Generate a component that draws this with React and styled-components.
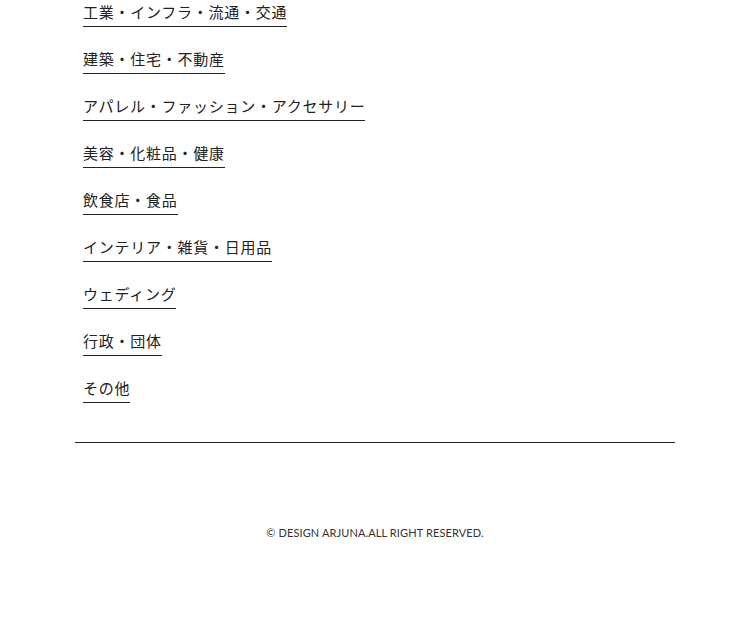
import styled, { createGlobalStyle } from "styled-components";

const GlobalStyle = createGlobalStyle`
  html, body {
    margin: 0;
    padding: 0;
    background: #fff;
  }
  body {
    font-family: "Noto Sans CJK JP", "Noto Sans", sans-serif;
    color: #222;
  }
`;

const categories = [
  "工業・インフラ・流通・交通",
  "建築・住宅・不動産",
  "アパレル・ファッション・アクセサリー",
  "美容・化粧品・健康",
  "飲食店・食品",
  "インテリア・雑貨・日用品",
  "ウェディング",
  "行政・団体",
  "その他",
];

const App = () => {
  return (
    <>
      <GlobalStyle />
      <Page>
        <CategoryList>
          {categories.map((name) => (
            <CategoryItem key={name}>
              <CategoryLink href="#">{name}</CategoryLink>
            </CategoryItem>
          ))}
        </CategoryList>
        <Footer>
          <Copy>© DESIGN ARJUNA.ALL RIGHT RESERVED.</Copy>
        </Footer>
      </Page>
    </>
  );
};
export default App;

const Page = styled.div`
  width: 600px;
  margin: 0 auto;
`;

const CategoryList = styled.ul`
  list-style: none;
  margin: 0;
  padding: 1px 8px 39px;
  display: flex;
  flex-direction: column;
  gap: 21px;
  border-bottom: 1px solid #222;
`;

const CategoryItem = styled.li`
  display: flex;
`;

const CategoryLink = styled.a`
  display: inline-block;
  font-size: 15px;
  line-height: 22px;
  letter-spacing: 0.05em;
  margin-right: -0.05em;
  padding-bottom: 3px;
  color: #222;
  text-decoration: none;
  border-bottom: 1px solid #222;
`;

const Footer = styled.footer`
  display: flex;
  justify-content: center;
  padding: 82px 0 80px;
`;

const Copy = styled.p`
  margin: 0;
  font-family: Lato, "Open Sans", sans-serif;
  font-size: 11px;
  letter-spacing: 0.01em;
  line-height: 16px;
  color: #333;
`;
